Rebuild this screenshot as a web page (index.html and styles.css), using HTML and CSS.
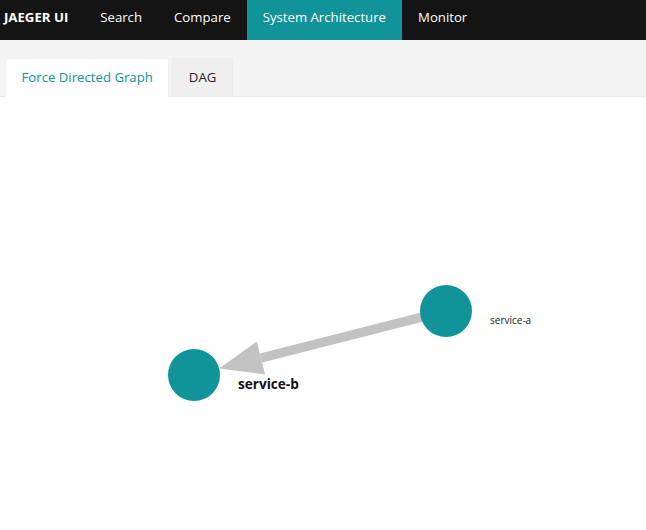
FILE: index.html
```html
<!DOCTYPE html>
<html lang="en">
<head>
<meta charset="utf-8">
<title>Jaeger UI - System Architecture</title>
<link rel="stylesheet" href="styles.css">
</head>
<body>
<nav class="topnav">
  <a class="brand">JAEGER UI</a>
  <a class="nav-item">Search</a>
  <a class="nav-item">Compare</a>
  <a class="nav-item active">System Architecture</a>
  <a class="nav-item">Monitor</a>
</nav>
<div class="tabbar">
  <div class="tab tab-active">Force Directed Graph</div>
  <div class="tab">DAG</div>
</div>
<main class="graph">
  <svg class="graph-svg" width="646" height="433" viewBox="0 0 646 433">
    <line x1="446" y1="214" x2="261" y2="261" class="edge"/>
    <polygon points="219.2,271.6 256.7,244.5 265.1,277.5" class="arrow"/>
    <circle cx="446" cy="214" r="26" class="node"/>
    <circle cx="194" cy="278" r="26" class="node"/>
    <text x="490" y="226.5" class="label-small">service-a</text>
    <text x="238" y="292" class="label-bold">service-b</text>
  </svg>
</main>
</body>
</html>
```
FILE: styles.css
```css
* { box-sizing: border-box; }
html, body { margin: 0; padding: 0; background: #fff; }
body {
  font-family: "Open Sans", "Noto Sans", sans-serif;
  font-size: 13.2px;
  color: #222;
  width: 646px;
  height: 530px;
  overflow: hidden;
}
.topnav {
  display: flex;
  height: 40px;
  background: #141414;
  align-items: stretch;
}
.topnav a {
  display: flex;
  align-items: center;
  padding-bottom: 7px;
  color: #fff;
  text-decoration: none;
  font-size: 13.2px;
  white-space: nowrap;
}
.brand {
  font-weight: 700;
  padding-left: 4px;
  padding-right: 16px;
}
.nav-item {
  padding-left: 16px;
  padding-right: 16px;
}
.nav-item.active { background: #11939a; }
.tabbar {
  display: flex;
  gap: 3px;
  height: 57px;
  padding: 18px 0 0 5px;
  background: #f4f4f4;
  border-bottom: 1px solid #e8e8e8;
}
.tab {
  height: 39px;
  padding: 0 15.5px 3px;
  display: flex;
  align-items: center;
  background: #efefef;
  color: #222;
  font-size: 13.2px;
  border: 1px solid #ececec;
  border-bottom: none;
}
.tab-active {
  background: #fff;
  color: #11939a;
  border-color: #f0f0f0;
}
.graph { height: 433px; }
.graph-svg { display: block; }
.edge { stroke: #c2c2c2; stroke-width: 9.5; }
.arrow { fill: #c2c2c2; }
.node { fill: #11939a; }
.label-small { font-size: 10px; fill: #222; }
.label-bold { font-size: 13.6px; font-weight: 700; fill: #111; }
```
